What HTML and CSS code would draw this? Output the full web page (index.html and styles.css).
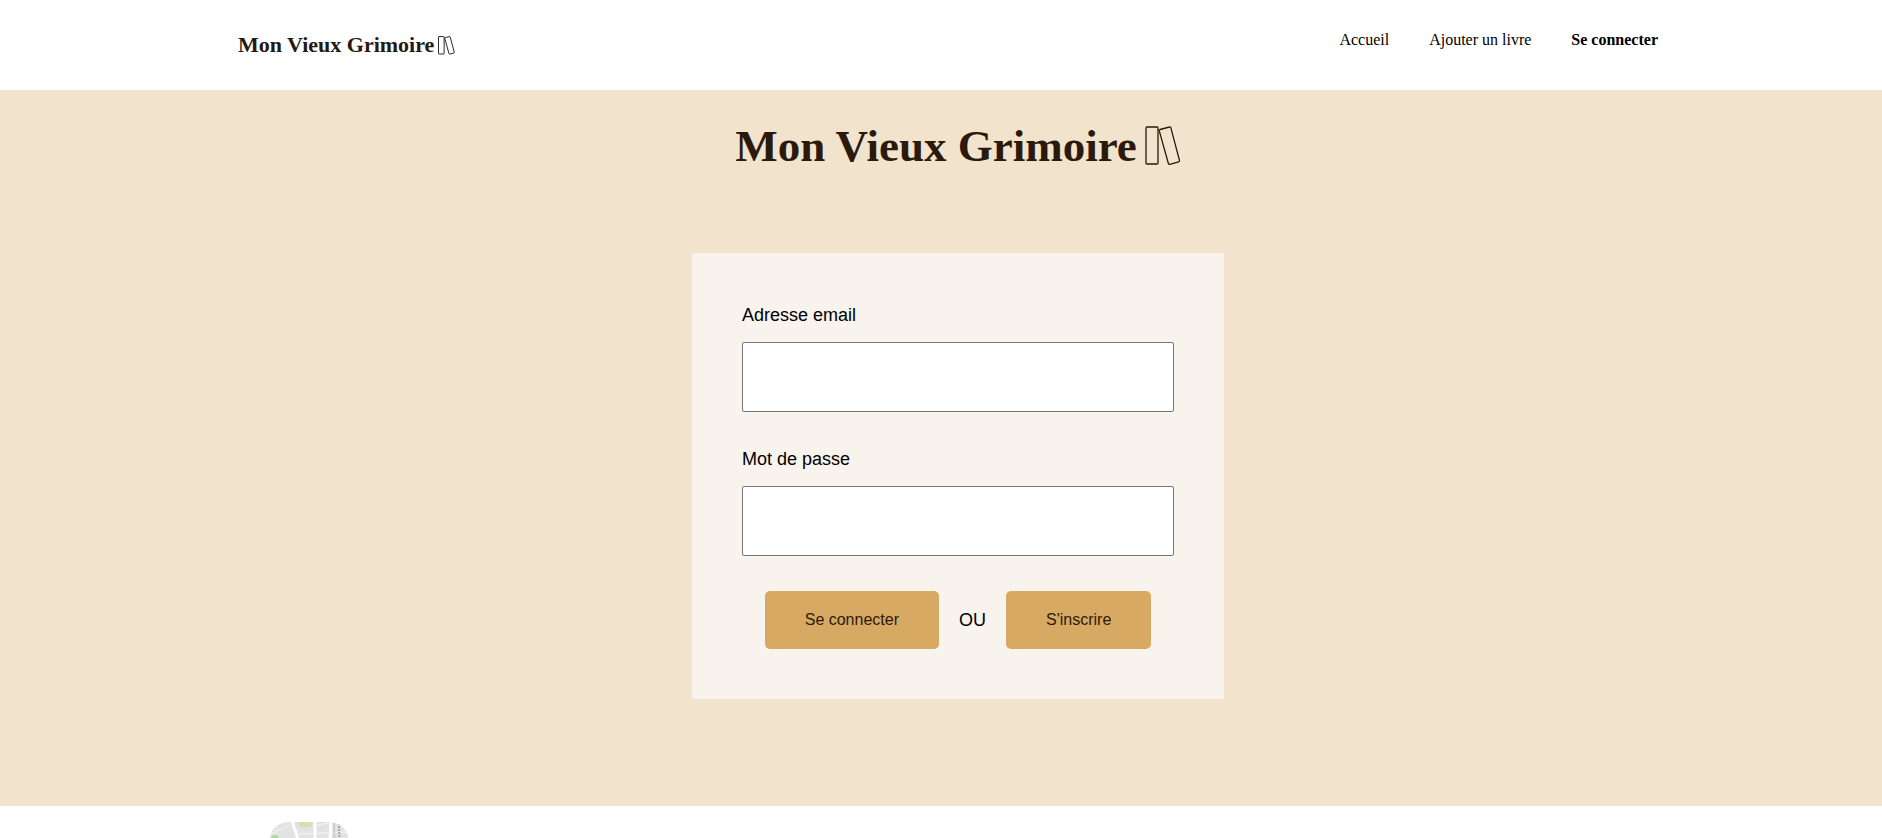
FILE: index.html
```html
<!DOCTYPE html>
<html lang="fr">
<head>
<meta charset="utf-8">
<title>Mon Vieux Grimoire</title>
<link rel="stylesheet" href="styles.css">
</head>
<body>
<header class="site-header">
  <div class="container header-row">
    <a class="logo" href="#">
      <span>Mon Vieux Grimoire</span>
      <svg class="logo-books" viewBox="0 0 36 40" aria-hidden="true"><rect x="1" y="1" width="12" height="37" rx="1"/><path d="M15 3.500 24.500 1q1-.3 1.300.7L34.500 34.500q.2 1-.8 1.300L24.700 38.300q-1 .2-1.300-.8L14.200 4.700q-.2-1 .8-1.200Z"/></svg>
    </a>
    <nav class="menu">
      <a href="#">Accueil</a>
      <a href="#">Ajouter un livre</a>
      <a class="active" href="#">Se connecter</a>
    </nav>
  </div>
</header>
<main class="login">
  <div class="container login-column">
    <h1 class="logo logo-large">
      <span>Mon Vieux Grimoire</span>
      <svg class="logo-books" viewBox="0 0 36 40" aria-hidden="true"><rect x="1" y="1" width="12" height="37" rx="1"/><path d="M15 3.500 24.500 1q1-.3 1.300.7L34.500 34.500q.2 1-.8 1.300L24.700 38.300q-1 .2-1.300-.8L14.200 4.700q-.2-1 .8-1.200Z"/></svg>
    </h1>
    <form class="login-form">
      <label for="email">Adresse email</label>
      <input id="email" type="text" name="email">
      <label for="password">Mot de passe</label>
      <input id="password" type="password" name="password">
      <div class="actions">
        <button type="submit">Se connecter</button>
        <span>OU</span>
        <button type="button">S'inscrire</button>
      </div>
    </form>
  </div>
</main>
<footer class="site-footer">
  <div class="container footer-row">
    <svg class="map" viewBox="0 0 80 80" role="img" aria-label="Plan">
      <rect width="80" height="80" fill="#e3e3e3"/>
      <circle cx="6" cy="17" r="4" fill="#a9dc9c"/>
      <path d="M28 0H44L42 5H31Z" fill="#d5dfb0"/>
      <path d="M23-1 30 20 34 80M46 0V80M62 0 58 80M0 40 80 34" fill="none" stroke="#fff" stroke-width="3"/>
      <path d="M0 13 20 3M30 12 80 10M47 3 62 1" fill="none" stroke="#f6f6f6" stroke-width="1"/>
      <path d="M65 0 67 80" fill="none" stroke="#d0d0d0" stroke-width="2"/>
      <path d="M70 1 72 80" fill="none" stroke="#a6a6a6" stroke-width="2" stroke-dasharray="2 1"/>
    </svg>
  </div>
</footer>
</body>
</html>
```
FILE: styles.css
```css
* {
  box-sizing: border-box;
}

body {
  margin: 0;
  background: #fff;
  color: #000;
  font-family: "Liberation Serif", "Times New Roman", serif;
  font-size: 16px;
}

.site-header,
.login,
.site-footer {
  padding-left: 34px;
}

.container {
  max-width: 1440px;
  margin: 0 auto;
}

.header-row {
  display: flex;
  justify-content: space-between;
  align-items: flex-start;
  min-height: 90px;
  padding: 30px 20px 0 0;
}

.logo {
  display: flex;
  align-items: center;
  gap: 4px;
  margin: 0;
  color: #231a16;
  font-size: 22px;
  font-weight: 700;
  line-height: 30px;
  text-decoration: none;
}

.logo-books {
  width: 17px;
  height: 19px;
  fill: none;
  stroke: currentColor;
  stroke-width: 2;
}

.menu {
  display: flex;
  gap: 40px;
  line-height: 20px;
}

.menu a {
  color: #000;
  text-decoration: none;
}

.menu .active {
  font-weight: 700;
}

.login {
  background: #f2e3cd;
}

.login-column {
  display: flex;
  flex-direction: column;
  align-items: center;
  padding: 28px 0 107px;
}

.logo-large {
  gap: 8px;
  margin-bottom: 79px;
  color: #2b1a0b;
  font-size: 45px;
  line-height: 56px;
}

.logo-large .logo-books {
  width: 36px;
  height: 40px;
  stroke-width: 1.3;
}

.login-form {
  display: flex;
  flex-direction: column;
  width: 100%;
  max-width: 532px;
  padding: 50px;
  background: #f8f3ec;
  font-family: "Liberation Sans", Arial, sans-serif;
  font-size: 18px;
  line-height: 21px;
}

.login-form label {
  padding-top: 2px;
  margin-bottom: 16px;
}

.login-form input {
  height: 70px;
  margin: 0 0 35px;
  padding: 0 16px;
  border: 1px solid #767676;
  border-radius: 2px;
  background: #fff;
  font: inherit;
}

.actions {
  display: flex;
  justify-content: center;
  align-items: center;
  gap: 20px;
}

.actions button {
  padding: 20px 40px;
  border: 0;
  border-radius: 5px;
  background: #d8a962;
  color: #2b1a0b;
  font-family: inherit;
  font-size: 16px;
  line-height: 18px;
}

.footer-row {
  padding: 16px 31px;
}

.map {
  display: block;
  width: 80px;
  height: 80px;
  border-radius: 20px;
}
```
